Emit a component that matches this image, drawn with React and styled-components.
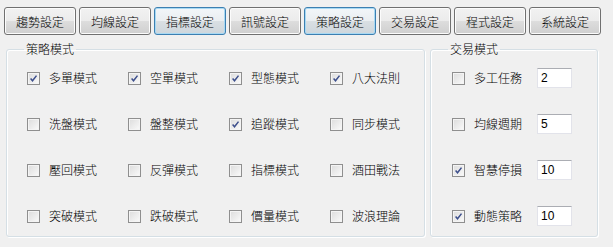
import React from 'react';
import styled, { createGlobalStyle } from 'styled-components';

const GlobalStyle = createGlobalStyle`
  html, body {
    margin: 0;
    padding: 0;
    background: #f0f0f0;
  }
  body {
    font-family: "Noto Sans CJK TC", "Liberation Sans", sans-serif;
    font-size: 12px;
    font-weight: 300;
    color: #000;
  }
`;

const Window = styled.div`
  width: 613px;
  height: 247px;
  box-sizing: border-box;
  padding: 7px 0 0 4px;
  background: #f0f0f0;
`;

const Toolbar = styled.div`
  display: flex;
  gap: 3px;
`;

const TabButton = styled.button`
  width: 72px;
  height: 28px;
  padding: 0;
  font-family: "Noto Sans CJK TC", sans-serif;
  font-size: 12px;
  font-weight: 300;
  color: #000;
  border-radius: 3px;
  border: 1px solid ${(p) => (p.$focused ? '#3c7fb1' : '#707070')};
  background: ${(p) =>
    p.$focused
      ? 'linear-gradient(#f2f6f9 0%, #eaeef1 50%, #d9dfe3 51%, #ced6dc 100%)'
      : 'linear-gradient(#f2f2f2 0%, #ebebeb 50%, #dddddd 51%, #cfcfcf 100%)'};
  box-shadow: inset 0 0 0 1px ${(p) => (p.$focused ? '#a8d9f3' : '#fcfcfc')};
  cursor: pointer;
`;

const Panels = styled.div`
  display: flex;
  gap: 5px;
  margin-top: 6px;
  padding-left: 2px;
`;

const Group = styled.fieldset`
  margin: 0;
  padding: 0;
  min-width: 0;
  width: ${(p) => p.$width}px;
  height: 196px;
  box-sizing: border-box;
  border: 1px solid #d5dfe5;
  border-radius: 3px;
  box-shadow: inset 1px 1px 0 #fff, 1px 1px 0 #fff;
  overflow: hidden;
`;

const Legend = styled.legend`
  margin-left: 17px;
  padding: 0 2px;
  font-size: 12px;
  line-height: 16px;
`;

const ModeGrid = styled.div`
  display: grid;
  grid-template-columns: repeat(3, 101px) 1fr;
  grid-auto-rows: 46px;
  margin-top: -2px;
  padding-left: 20px;
`;

const TradeList = styled.div`
  display: grid;
  grid-auto-rows: 46px;
  margin-top: -2px;
  padding-left: 21px;
`;

const Option = styled.label`
  display: flex;
  align-items: center;
  gap: 9px;
  line-height: 14px;
  white-space: nowrap;
`;

const TradeRow = styled.div`
  display: flex;
  align-items: center;
`;

const TradeOption = styled(Option)`
  width: 85px;
`;

const Box = styled.span`
  position: relative;
  flex: none;
  width: 13px;
  height: 13px;
  box-sizing: border-box;
  border: 1px solid #8f8f8f;
  background: linear-gradient(135deg, #dcdcdc 0%, #eeeeee 60%, #fbfbfb 100%);
  box-shadow: inset 0 0 0 1px #f4f4f4;
`;

const Check = () => (
  <svg width="11" height="11" viewBox="0 0 11 11" style={{ position: 'absolute', left: 0, top: 0 }}>
    <path d="M2.6 5.6 L4.5 7.8 L8.5 2.6" fill="none" stroke="#3d4f8c" strokeWidth="1.5" />
  </svg>
);

const CheckBox = ({ checked }) => <Box>{checked && <Check />}</Box>;

const NumberField = styled.input`
  width: 35px;
  height: 20px;
  box-sizing: border-box;
  margin: 0;
  padding: 0 0 0 3px;
  border: 1px solid #e2e3ea;
  border-top-color: #abadb3;
  background: #fff;
  font-family: "Liberation Sans", sans-serif;
  font-size: 12px;
  color: #000;
  outline: none;
`;

const tabs = [
  { name: '趨勢設定' },
  { name: '均線設定' },
  { name: '指標設定', focused: true },
  { name: '訊號設定' },
  { name: '策略設定', focused: true },
  { name: '交易設定' },
  { name: '程式設定' },
  { name: '系統設定' },
];

const modes = [
  ['多單模式', true], ['空單模式', true], ['型態模式', true], ['八大法則', true],
  ['洗盤模式', false], ['盤整模式', false], ['追蹤模式', true], ['同步模式', false],
  ['壓回模式', false], ['反彈模式', false], ['指標模式', false], ['酒田戰法', false],
  ['突破模式', false], ['跌破模式', false], ['價量模式', false], ['波浪理論', false],
];

const trades = [
  ['多工任務', false, '2'],
  ['均線週期', false, '5'],
  ['智慧停損', true, '10'],
  ['動態策略', true, '10'],
];

export default function App() {
  return (
    <>
      <GlobalStyle />
      <Window>
        <Toolbar>
          {tabs.map((t) => (
            <TabButton key={t.name} $focused={t.focused}>
              {t.name}
            </TabButton>
          ))}
        </Toolbar>
        <Panels>
          <Group $width={419}>
            <Legend>策略模式</Legend>
            <ModeGrid>
              {modes.map(([label, on]) => (
                <Option key={label}>
                  <CheckBox checked={on} />
                  {label}
                </Option>
              ))}
            </ModeGrid>
          </Group>
          <Group $width={168}>
            <Legend>交易模式</Legend>
            <TradeList>
              {trades.map(([label, on, value]) => (
                <TradeRow key={label}>
                  <TradeOption>
                    <CheckBox checked={on} />
                    {label}
                  </TradeOption>
                  <NumberField defaultValue={value} />
                </TradeRow>
              ))}
            </TradeList>
          </Group>
        </Panels>
      </Window>
    </>
  );
}
